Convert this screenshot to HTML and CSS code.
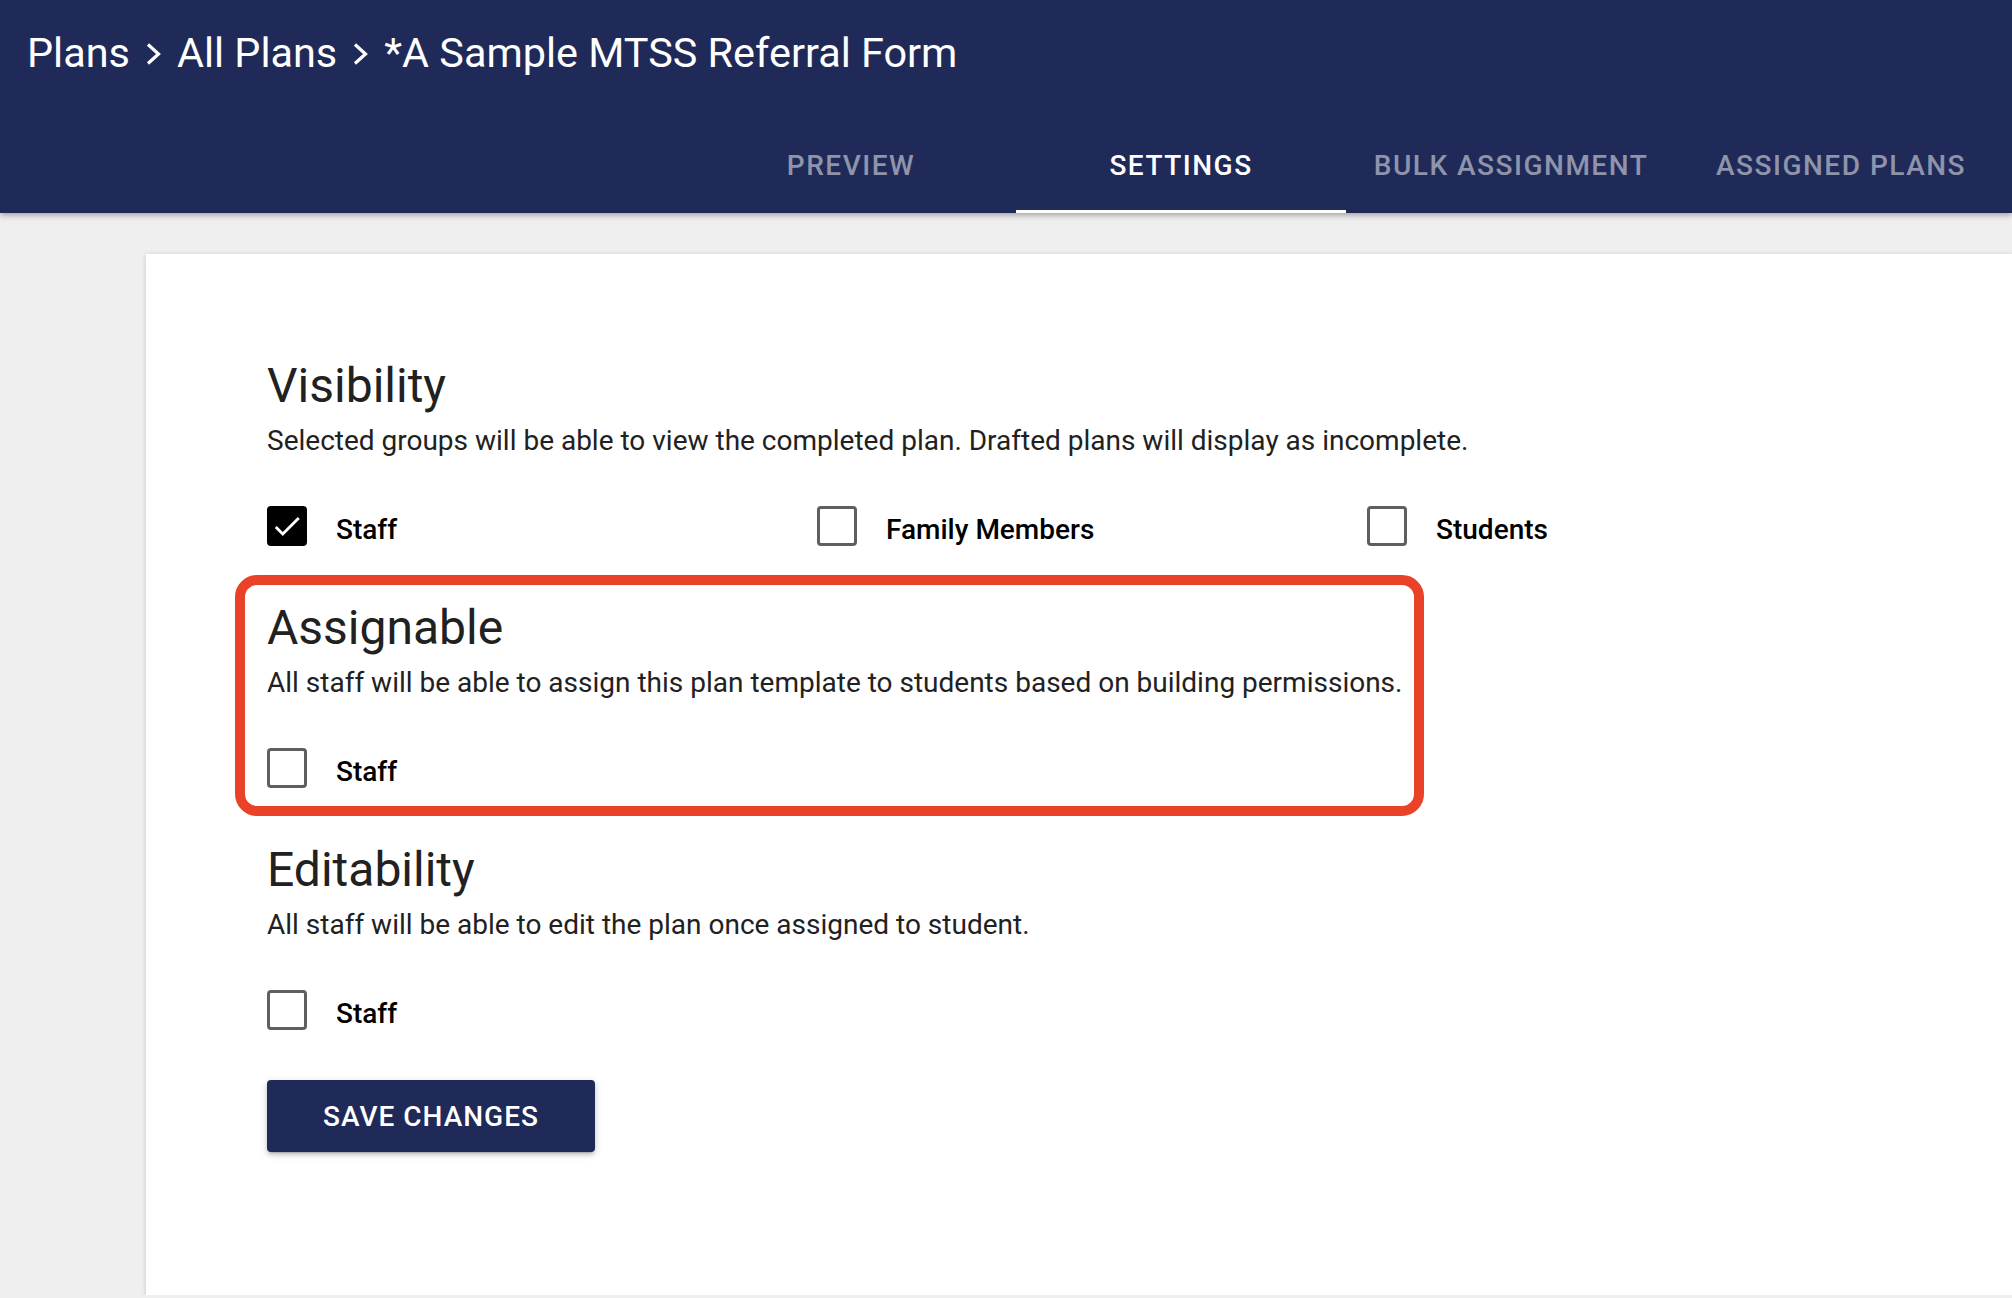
FILE: index.html
```html
<!DOCTYPE html>
<html lang="en">

<head>
  <meta charset="UTF-8" />
  <title>Settings | *A Sample MTSS Referral Form</title>
  <link rel="stylesheet" href="styles.css">
</head>

<body>
  <header class="topbar">
    <div class="crumbs">
      <a href="#">Plans</a>
      <svg class="chev" viewBox="0 0 15 22"><polyline points="2,1.5 12.5,11 2,20.5" /></svg>
      <a href="#">All Plans</a>
      <svg class="chev" viewBox="0 0 15 22"><polyline points="2,1.5 12.5,11 2,20.5" /></svg>
      <span>*A Sample MTSS Referral Form</span>
    </div>
    <nav class="tabs">
      <a href="#" class="tab">Preview</a>
      <a href="#" class="tab active">Settings</a>
      <a href="#" class="tab">Bulk Assignment</a>
      <a href="#" class="tab">Assigned Plans</a>
    </nav>
  </header>

  <main class="page">
    <form class="card" id="settingsForm">
      <div class="group">
        <h2>Visibility</h2>
        <p class="hint">Selected groups will be able to view the completed plan. Drafted plans will display as incomplete.</p>
        <div class="options">
          <label class="option">
            <span class="box checked">
              <svg viewBox="0 0 24 24"><path d="M9 16.17L4.83 12l-1.42 1.41L9 19 21 7l-1.41-1.41z" /></svg>
            </span>
            <span class="label">Staff</span>
          </label>
          <label class="option">
            <span class="box"></span>
            <span class="label">Family Members</span>
          </label>
          <label class="option">
            <span class="box"></span>
            <span class="label">Students</span>
          </label>
        </div>
      </div>

      <div class="group highlighted">
        <div class="highlight"></div>
        <h2>Assignable</h2>
        <p class="hint">All staff will be able to assign this plan template to students based on building permissions.</p>
        <div class="options">
          <label class="option">
            <span class="box"></span>
            <span class="label">Staff</span>
          </label>
        </div>
      </div>

      <div class="group">
        <h2>Editability</h2>
        <p class="hint">All staff will be able to edit the plan once assigned to student.</p>
        <div class="options">
          <label class="option">
            <span class="box"></span>
            <span class="label">Staff</span>
          </label>
        </div>
      </div>

      <button type="submit" class="save">Save Changes</button>
    </form>
  </main>
</body>

</html>
```

FILE: styles.css
```css
body {
  margin: 0;
  font-family: Roboto, "Liberation Sans", Arial, sans-serif;
  background-color: #efefef;
  color: #212121;
  overflow: hidden;
}

a {
  color: inherit;
  text-decoration: none;
}

/* top bar */
.topbar {
  background-color: #1f2a58;
  color: #fff;
  box-shadow: 0 2px 6px rgba(0, 0, 0, 0.35);
  position: relative;
}

.crumbs {
  height: 117px;
  box-sizing: border-box;
  padding: 28px 0 0 27px;
  display: flex;
  align-items: flex-start;
  font-size: 41.4px;
  line-height: 50px;
}

.chev {
  width: 15px;
  height: 22px;
  margin: 15px 16px 0 16px;
  fill: none;
  stroke: #fff;
  stroke-width: 3.2;
}

.tabs {
  display: flex;
  justify-content: flex-end;
  padding-right: 6px;
}

.tab {
  width: 330px;
  height: 96px;
  display: flex;
  align-items: center;
  justify-content: center;
  box-sizing: border-box;
  font-size: 28px;
  font-weight: 500;
  letter-spacing: 1.5px;
  text-transform: uppercase;
  color: rgba(255, 255, 255, 0.5);
  border-bottom: 3px solid transparent;
  padding-top: 3px;
}

.tab.active {
  color: #fff;
  border-bottom-color: #fff;
}

/* content */
.page {
  padding: 41px 0 0 146px;
}

.card {
  background: #fff;
  padding: 104px 0 143px 121px;
  box-shadow: 0 1px 5px rgba(0, 0, 0, 0.18);
}

.group {
  margin-bottom: 54px;
}

.group.highlighted {
  position: relative;
}

.highlight {
  position: absolute;
  top: -25px;
  left: -32px;
  width: 1189px;
  height: 241px;
  box-sizing: border-box;
  border: 10px solid #ea4129;
  border-radius: 22px;
  pointer-events: none;
}

h2 {
  margin: 0;
  font-size: 48px;
  font-weight: 400;
  line-height: 56px;
  color: #212121;
}

.hint {
  margin: 11px 0 0;
  font-size: 28px;
  line-height: 32px;
}

.options {
  display: grid;
  grid-template-columns: repeat(3, 550px);
  margin-top: 49px;
}

.option {
  display: flex;
  align-items: flex-start;
  height: 40px;
}

.box {
  width: 40px;
  height: 40px;
  box-sizing: border-box;
  border: 3px solid #5f5f5f;
  border-radius: 4px;
  flex-shrink: 0;
}

.box.checked {
  background: #000;
  border-color: #000;
  display: flex;
  align-items: center;
  justify-content: center;
}

.box.checked svg {
  width: 34px;
  height: 34px;
  fill: #fff;
}

.label {
  margin: 8px 0 0 29px;
  font-size: 28px;
  line-height: 32px;
  font-weight: 500;
  color: #000;
}

.save {
  width: 328px;
  height: 72px;
  margin-top: -4px;
  background-color: #1f2a58;
  color: #fff;
  border: none;
  border-radius: 4px;
  font-family: inherit;
  font-size: 28px;
  font-weight: 500;
  letter-spacing: 1px;
  text-transform: uppercase;
  box-shadow: 0 4px 2px -3px rgba(0, 0, 0, 0.2), 0 3px 4px 0 rgba(0, 0, 0, 0.14), 0 2px 10px 0 rgba(0, 0, 0, 0.12);
}
```
